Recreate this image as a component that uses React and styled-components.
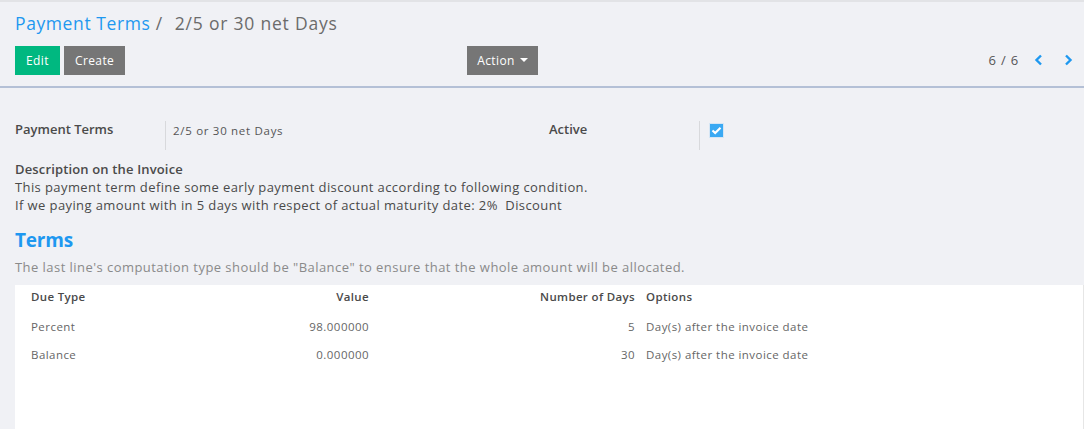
import React from "react";
import styled, { createGlobalStyle } from "styled-components";

const Global = createGlobalStyle`
  html, body { margin: 0; padding: 0; background: #f0f1f5; }
  body { font-family: "Open Sans", "Noto Sans", sans-serif; color: #4c4c4c; }
  * { box-sizing: border-box; }
`;

const Page = styled.div`
  width: 1084px;
  height: 429px;
  overflow: hidden;
  background: #f0f1f5;
  border-top: 2px solid #e2e3e6;
`;

const ControlPanel = styled.div`
  padding: 0 15px;
  border-bottom: 2px solid #b4c0d6;
  height: 86px;
`;

const Breadcrumb = styled.div`
  height: 43px;
  padding-top: 9px;
  font-size: 17.5px;
  letter-spacing: 0.6px;
  color: #6b6b6b;
  white-space: nowrap;
`;

const Crumb = styled.span`
  color: #1e98f0;
`;

const Current = styled.span`
  margin-left: 12px;
  letter-spacing: 0.8px;
`;

const Buttons = styled.div`
  display: flex;
  align-items: center;
  height: 30px;
`;

const Btn = styled.button`
  height: 29px;
  border: none;
  font-family: inherit;
  font-size: 12px;
  letter-spacing: 0.4px;
  color: #fff;
  padding: 0 ${(p) => p.$px || 11}px;
  background: ${(p) => (p.$primary ? "#00b880" : "#767676")};
  margin-right: 4px;
  display: flex;
  align-items: center;
  gap: 5px;
`;

const Spacer = styled.div`
  width: ${(p) => p.$w}px;
  flex: none;
`;

const Caret = styled.span`
  width: 0;
  height: 0;
  border-left: 4px solid transparent;
  border-right: 4px solid transparent;
  border-top: 4px solid #fff;
`;

const Pager = styled.div`
  margin-left: auto;
  margin-right: -13px;
  display: flex;
  align-items: center;
  font-size: 13px;
  letter-spacing: 0.8px;
  color: #555;
`;

const PagerValue = styled.span`
  margin-right: 5px;
`;

const Arrow = styled.span`
  width: 29px;
  display: flex;
  justify-content: center;
  color: #1e98f0;
`;

const Sheet = styled.div`
  padding: 32px 0 0 15px;
`;

const FieldRow = styled.div`
  display: flex;
  align-items: flex-start;
  height: 40px;
`;

const Label = styled.div`
  width: ${(p) => p.$w}px;
  font-size: 13px;
  font-weight: 600;
  color: #4a4a4a;
  flex: none;
`;

const Sep = styled.div`
  width: 1px;
  height: 29px;
  margin-top: 1px;
  background: #d8d9dc;
  flex: none;
`;

const Value = styled.div`
  width: ${(p) => p.$w}px;
  font-size: 11.5px;
  letter-spacing: 0.7px;
  color: #555;
  padding: 3px 0 0 7px;
  flex: none;
`;

const Check = styled.div`
  margin: 3px 0 0 9px;
  width: 15px;
  height: 15px;
  background: #3aa9f3;
  border: 1px solid #d5e6f5;
  display: flex;
  align-items: center;
  justify-content: center;
`;

const DescTitle = styled.div`
  font-size: 13px;
  font-weight: 600;
  letter-spacing: 0.15px;
  color: #4a4a4a;
  line-height: 18px;
`;

const DescText = styled.div`
  font-size: 13px;
  letter-spacing: 0.4px;
  line-height: 18px;
  color: #4a4a4a;
`;

const Heading = styled.div`
  font-size: 19px;
  font-weight: 700;
  color: #1e98f0;
  margin-top: 13px;
  line-height: 26px;
  letter-spacing: -0.2px;
`;

const Note = styled.div`
  font-size: 13px;
  letter-spacing: 0.45px;
  color: #8a8a8a;
  margin-top: 5px;
  line-height: 18px;
`;

const TableBox = styled.div`
  margin-top: 9px;
  background: #fff;
  height: 200px;
  border-right: 1px solid #e6e6e6;
`;

const Grid = styled.div`
  display: grid;
  grid-template-columns: 16px 150px 188px 266px 11px 1fr;
  font-size: 11.5px;
`;

const Cell = styled.div`
  height: ${(p) => (p.$head ? "27px" : "28px")};
  padding-top: ${(p) => (p.$head ? "4px" : "0")};
  display: flex;
  align-items: ${(p) => (p.$head ? "flex-start" : "center")};
  justify-content: ${(p) => (p.$right ? "flex-end" : "flex-start")};
  font-weight: ${(p) => (p.$head ? 600 : 400)};
  letter-spacing: ${(p) => (p.$head ? "0.35px" : "0.45px")};
  color: ${(p) => (p.$head ? "#4a4a4a" : "#666")};
  white-space: nowrap;
`;

const Empty = styled.div``;

const rows = [
  ["Percent", "98.000000", "5", "Day(s) after the invoice date"],
  ["Balance", "0.000000", "30", "Day(s) after the invoice date"],
];

export default function App() {
  return (
    <Page>
      <Global />
      <ControlPanel>
        <Breadcrumb>
          <Crumb>Payment Terms</Crumb> /<Current>2/5 or 30 net Days</Current>
        </Breadcrumb>
        <Buttons>
          <Btn $primary $px={11}>Edit</Btn>
          <Btn $px={11}>Create</Btn>
          <Spacer $w={338} />
          <Btn $px={10}>
            Action <Caret />
          </Btn>
          <Pager>
            <PagerValue>6 / 6</PagerValue>
            <Arrow>
              <svg width="10" height="12" viewBox="0 0 10 12">
                <path d="M7 1.5 L2.5 6 L7 10.5" fill="none" stroke="#1e98f0" strokeWidth="2.4" />
              </svg>
            </Arrow>
            <Arrow>
              <svg width="10" height="12" viewBox="0 0 10 12">
                <path d="M3 1.5 L7.5 6 L3 10.5" fill="none" stroke="#1e98f0" strokeWidth="2.4" />
              </svg>
            </Arrow>
          </Pager>
        </Buttons>
      </ControlPanel>
      <Sheet>
        <FieldRow>
          <Label $w={150}>Payment Terms</Label>
          <Sep />
          <Value $w={383}>2/5 or 30 net Days</Value>
          <Label $w={150}>Active</Label>
          <Sep />
          <Check>
            <svg width="11" height="9" viewBox="0 0 11 9">
              <path d="M1.5 4.5 L4.2 7 L9.5 1.8" fill="none" stroke="#fff" strokeWidth="2.2" />
            </svg>
          </Check>
        </FieldRow>
        <DescTitle>Description on the Invoice</DescTitle>
        <DescText>This payment term define some early payment discount according to following condition.</DescText>
        <DescText>If we paying amount with in 5 days with respect of actual maturity date: 2%&nbsp; Discount</DescText>
        <Heading>Terms</Heading>
        <Note>The last line's computation type should be "Balance" to ensure that the whole amount will be allocated.</Note>
        <TableBox>
          <Grid>
            <Empty />
            <Cell $head>Due Type</Cell>
            <Cell $head $right>Value</Cell>
            <Cell $head $right>Number of Days</Cell>
            <Empty />
            <Cell $head>Options</Cell>
            {rows.map((r) => (
              <React.Fragment key={r[0]}>
                <Empty />
                <Cell>{r[0]}</Cell>
                <Cell $right>{r[1]}</Cell>
                <Cell $right>{r[2]}</Cell>
                <Empty />
                <Cell>{r[3]}</Cell>
              </React.Fragment>
            ))}
          </Grid>
        </TableBox>
      </Sheet>
    </Page>
  );
}
